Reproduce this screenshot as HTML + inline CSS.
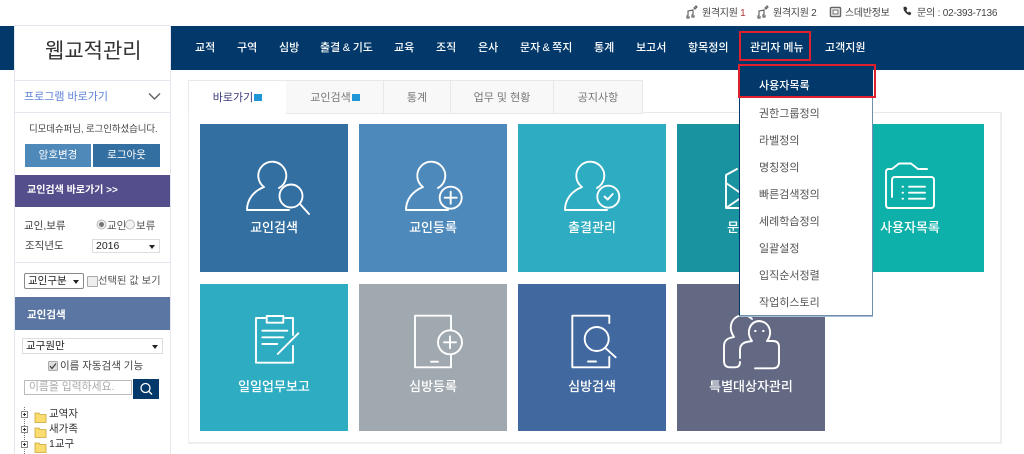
<!DOCTYPE html>
<html lang="ko">
<head>
<meta charset="utf-8">
<title>웹교적관리</title>
<style>
html,body{margin:0;padding:0;background:#fff}
body{width:1024px;height:454px;overflow:hidden;position:relative;font-family:"Liberation Sans","Noto Sans CJK KR",sans-serif;font-size:11px;color:#444}
.a{position:absolute;white-space:nowrap;line-height:14px}
.b{position:absolute}
.nav{color:#fff;font-weight:500;top:41px}
.top{top:7px;font-size:10px;color:#444;letter-spacing:-.3px}
.tile{position:absolute;width:148px;height:148px}
.lab{position:absolute;left:0;width:100%;text-align:center;color:#fff;font-size:13px;font-weight:500;line-height:16px}
.tab{position:absolute;top:80px;height:32px;background:#f8f8f8;border:1px solid #e8e8e8;border-left:0;box-sizing:content-box;text-align:center;line-height:34px;color:#777;font-size:11px}
.n{display:inline-block;width:8px;height:7px;background:#1e96d8;margin-left:1px;vertical-align:0}
.dd{position:absolute;left:759px;color:#555;font-size:11px;line-height:14px;white-space:nowrap}
.sel{position:absolute;box-sizing:border-box;background:#fff;border:1px solid #ddd;line-height:14px}
.arr{position:absolute;width:0;height:0;border-left:3px solid transparent;border-right:3px solid transparent;border-top:4px solid #222}
</style>
</head>
<body>
<!-- header -->
<div class="b" style="left:0;top:26px;width:1024px;height:44px;background:#03396a"></div>

<span class="a top" style="left:702px">원격지원 <span style="color:#a33">1</span></span>
<span class="a top" style="left:773px">원격지원 2</span>
<span class="a top" style="left:845px">스데반정보</span>
<span class="a top" style="left:917px;letter-spacing:-.2px">문의 : 02-393-7136</span>
<svg class="b" style="left:680px;top:-1px" width="240" height="26" fill="none" stroke="#666" stroke-width="1.2">
<path d="M8 17v-5l5-1v5M8 17h-1v2h2v-2M13 16h-1v2h2v-2M14 9l2-2 1 1-2 2z"/>
<path d="M79 17v-5l5-1v5M79 17h-1v2h2v-2M84 16h-1v2h2v-2M85 9l2-2 1 1-2 2z"/>
<rect x="150.500" y="8.500" width="10" height="9" rx="1" stroke-width="1.500"/><rect x="153" y="11" width="5" height="4" stroke-width="1"/>
<path d="M224 8c-1 3 2 7 6 8l1-2-2-1-1 1c-1-1-2-2-2-3l1-1-1-2z" fill="#333" stroke="#333" stroke-width=".6"/>
</svg>

<span class="a nav" style="left:195px">교적</span>
<span class="a nav" style="left:237px">구역</span>
<span class="a nav" style="left:279px">심방</span>
<span class="a nav" style="left:320px;word-spacing:-.5px">출결 &amp; 기도</span>
<span class="a nav" style="left:394px">교육</span>
<span class="a nav" style="left:436px">조직</span>
<span class="a nav" style="left:478px">은사</span>
<span class="a nav" style="left:520px;word-spacing:-.8px">문자 &amp; 쪽지</span>
<span class="a nav" style="left:594px">통계</span>
<span class="a nav" style="left:636px">보고서</span>
<span class="a nav" style="left:688px">항목정의</span>
<span class="a nav" style="left:750px">관리자 메뉴</span>
<span class="a nav" style="left:825px">고객지원</span>
<div class="b" style="left:739px;top:31px;width:72px;height:30px;box-sizing:border-box;border:2px solid #e0202c"></div>

<!-- sidebar -->
<div class="b" style="left:14px;top:25px;width:157px;height:429px;box-sizing:border-box;background:#fff;border-left:1px solid #e6e6ee;border-right:1px solid #e6e6ee;border-top:1px solid #e6e6ee"></div>
<div class="a" style="left:45px;top:39px;font-size:21px;line-height:26px;color:#333">웹교적관리</div>
<div class="b" style="left:15px;top:80px;width:155px;height:1px;background:#e6e6ee"></div>
<div class="a" style="left:24px;top:90px;color:#5f83d6;font-size:11px">프로그램 바로가기</div>
<svg class="b" style="left:146px;top:91px" width="18" height="12" fill="none" stroke="#666" stroke-width="1.500"><path d="M3 2.500l5.500 5.500 5.500-5.500"/></svg>
<div class="b" style="left:15px;top:112px;width:155px;height:1px;background:#e6e6ee"></div>
<div class="a" style="left:29px;top:123px;font-size:9.500px;letter-spacing:-.1px;color:#444">디모데슈퍼님, 로그인하셨습니다.</div>
<div class="a" style="left:25px;top:144px;width:66px;height:23px;background:#4f89ba;color:#fff;text-align:center;line-height:22px;font-size:10.500px">암호변경</div>
<div class="a" style="left:93px;top:144px;width:67px;height:23px;background:#336fa0;color:#fff;text-align:center;line-height:22px;font-size:10.500px">로그아웃</div>

<div class="b" style="left:15px;top:175px;width:155px;height:32px;background:#544f8c"></div>
<div class="a" style="left:27px;top:184px;color:#fff;font-weight:700;font-size:10px">교인검색 바로가기 &gt;&gt;</div>

<div class="a" style="left:24px;top:219px;font-size:10.500px">교인,보류</div>
<svg class="b" style="left:96px;top:219px" width="40" height="12"><circle cx="5.500" cy="5.500" r="4.500" fill="#eee" stroke="#bbb"/><circle cx="5.500" cy="5.500" r="2.500" fill="#777"/><circle cx="34" cy="5.500" r="4.500" fill="#f2f2f2" stroke="#bbb"/></svg>
<div class="a" style="left:107px;top:219px;font-size:10.500px;color:#555">교인</div>
<div class="a" style="left:136px;top:219px;font-size:10.500px;color:#555">보류</div>
<div class="a" style="left:25px;top:239px;font-size:10.500px">조직년도</div>
<div class="sel" style="left:92px;top:239px;width:68px;height:14px;line-height:12px;padding-left:3px;font-size:10.500px;color:#222">2016</div>
<div class="arr" style="left:149px;top:245px"></div>
<div class="b" style="left:15px;top:262px;width:155px;height:1px;background:#e6e6ee"></div>
<div class="sel" style="left:24px;top:273px;width:60px;height:16px;border-color:#888;padding-left:3px;border-radius:2px;font-size:10.500px;color:#222">교인구분</div>
<div class="arr" style="left:73px;top:280px"></div>
<div class="b" style="left:87px;top:276px;width:9px;height:9px;border:1px solid #aaa;border-radius:1px;background:#eee"></div>
<div class="a" style="left:98px;top:275px;font-size:10.300px;color:#555">선택된 값 보기</div>

<div class="b" style="left:15px;top:297px;width:155px;height:33px;background:#5c76a3"></div>
<div class="a" style="left:27px;top:308px;color:#fff;font-weight:700;font-size:10.500px">교인검색</div>
<div class="sel" style="left:22px;top:338px;width:141px;height:16px;padding-left:3px;font-size:10.500px;color:#222">교구원만</div>
<div class="arr" style="left:152px;top:345px"></div>
<svg class="b" style="left:48px;top:361px" width="10" height="10"><rect x=".5" y=".5" width="9" height="9" rx="1" fill="#ddd" stroke="#aaa"/><path d="M2 5l2 2.500 4-5" fill="none" stroke="#444" stroke-width="1.300"/></svg>
<div class="a" style="left:60px;top:359px;font-size:10.500px;color:#444">이름 자동검색 기능</div>
<div class="sel" style="left:24px;top:380px;width:108px;height:15px;border-color:#bbb;padding-left:4px;line-height:13px;font-size:10.800px;color:#aaa">이름을 입력하세요.</div>
<div class="b" style="left:133px;top:379px;width:26px;height:20px;background:#03396a"></div>
<svg class="b" style="left:133px;top:379px" width="26" height="20" fill="none" stroke="#fff" stroke-width="1.300"><circle cx="12.500" cy="9" r="4.500"/><path d="M16 12.500l3 3"/></svg>

<svg class="b" style="left:15px;top:405px" width="34" height="49">
<path d="M9.500 2v47" stroke="#777" stroke-dasharray="1 1" fill="none"/>
<g fill="#fff" stroke="#888"><rect x="6.500" y="6.500" width="6" height="6"/><rect x="6.500" y="21.500" width="6" height="6"/><rect x="6.500" y="36.500" width="6" height="6"/></g>
<path d="M8 9.500h3M9.500 8v3M8 24.500h3M9.500 23v3M8 39.500h3M9.500 38v3" stroke="#333"/>
<g fill="#fbdc6e" stroke="#c9a53a" stroke-width=".8"><path d="M20 8h4l1 1.500h6v8H20z"/><path d="M20 23h4l1 1.500h6v8H20z"/><path d="M20 38h4l1 1.500h6v8H20z"/></g>
</svg>
<div class="a" style="left:49px;top:407px;font-size:10.500px;color:#333">교역자</div>
<div class="a" style="left:49px;top:422px;font-size:10.500px;color:#333">새가족</div>
<div class="a" style="left:49px;top:437px;font-size:10.500px;color:#333">1교구</div>

<!-- main panel -->
<div class="b" style="left:188px;top:112px;width:814px;height:332px;box-sizing:border-box;border:2px solid #eee;border-top:0;border-left-width:1px"></div>
<div class="b" style="left:188px;top:112px;width:814px;height:1px;background:#e8e8e8"></div>
<div class="tab" style="background:#fff;border-left:1px solid #e8e8e8;border-bottom:1px solid #fff;color:#3a3a7a;left:188px;width:97px">바로가기<span class="n"></span></div>
<div class="tab" style="left:286px;width:97px;text-indent:1px">교인검색<span class="n"></span></div>
<div class="tab" style="left:384px;width:66px">통계</div>
<div class="tab" style="left:451px;width:102px">업무 및 현황</div>
<div class="tab" style="left:554px;width:88px">공지사항</div>

<!-- tiles -->
<div class="tile" style="left:200px;top:124px;background:#336fa0"><div class="lab" style="top:96px">교인검색</div></div>
<div class="tile" style="left:359px;top:124px;background:#4e89bb"><div class="lab" style="top:96px">교인등록</div></div>
<div class="tile" style="left:518px;top:124px;background:#2eacc1"><div class="lab" style="top:96px">출결관리</div></div>
<div class="tile" style="left:677px;top:124px;background:#18939f"><div class="lab" style="top:96px">문자관리</div></div>
<div class="tile" style="left:836px;top:124px;background:#0eb0aa"><div class="lab" style="top:96px">사용자목록</div></div>
<div class="tile" style="left:200px;top:284px;height:147px;background:#2eacc1"><div class="lab" style="top:95px">일일업무보고</div></div>
<div class="tile" style="left:359px;top:284px;height:147px;background:#a0a9af"><div class="lab" style="top:95px">심방등록</div></div>
<div class="tile" style="left:518px;top:284px;height:147px;background:#4169a0"><div class="lab" style="top:95px">심방검색</div></div>
<div class="tile" style="left:677px;top:284px;height:147px;background:#636983"><div class="lab" style="top:95px">특별대상자관리</div></div>

<svg class="b" style="left:0;top:0" width="1024" height="454" fill="none" stroke="#fff" stroke-width="1.900" stroke-linecap="round" stroke-linejoin="round">
<!-- person search -->
<path d="M279 188A14 14 0 1 0 264 187C254 191 247 199 247 210H289"/>
<circle cx="291" cy="196" r="11.500"/><path d="M300 204L309 214"/>
<!-- person plus -->
<path d="M438 188A14 14 0 1 0 423 187C413 191 406 199 406 210H448"/>
<circle cx="450.700" cy="197.700" r="11"/><path d="M444.700 197.700H456.700M450.700 191.700V203.700"/>
<!-- person check -->
<path d="M597 188A14 14 0 1 0 582 187C572 191 565 199 565 210H607"/>
<circle cx="608.300" cy="196.700" r="11"/><path d="M604.500 196.500L607.700 199.500L612.700 194"/>
<!-- envelope -->
<path d="M737 169L726 175V208H745M726 183L742 194M726 208L742 197"/>
<!-- folder -->
<path d="M927 169H918L911 163.500H899L892 169H889Q886 169 886 172V205Q886 208 889 208H931Q934 208 934 205V180Q934 177 931 177H895Q892 177 892 180V197"/>
<path d="M909 186.700H925M909 192.700H925M909 198.700H925M902.500 186.700h.5M902.500 192.700h.5M902.500 198.700h.5"/>
<!-- clipboard -->
<path d="M265 318H256V362.700H293V346M285 318H293V335"/>
<rect x="266.700" y="316" width="16.600" height="6.700"/>
<path d="M262.300 330.700H287.300M262.300 337.300H283.300M262.300 344H277.300M298.300 333.300L277.700 354"/>
<!-- tablet plus -->
<path d="M451 330V315.700H415V367.300H451V355M431 361.700H438"/>
<circle cx="450" cy="342.300" r="12"/><path d="M444 342.300H456M450 336.300V348.300"/>
<!-- tablet search -->
<path d="M609.300 323V315.700H572.300V367.300H609.300V357M588 361.500H596"/>
<circle cx="596.700" cy="339" r="12"/><path d="M605 347.700L615.700 357.300"/>
<!-- people -->
<path d="M755 368.300H773Q779 368.300 779 362V347Q779 341 773 341H767C773 333 770 322 759 321C749 322 746 333 752 341C745 342 740 343 740 350V358"/>
<path d="M752 319C745 312 733 315 731 325C730 330 732 334 734 337C728 338 724 340 724 346V361Q724 367.300 730 367.300H735Q740 367.300 740 362"/>
<path d="M755 331h.6M763 331h.6"/>
</svg>

<!-- dropdown -->
<div class="b" style="left:739px;top:66px;width:134px;height:250px;box-sizing:border-box;background:#fff;border:1px solid #03396a;border-bottom:1px solid #6f8fb0;border-right:1px solid #6f8fb0;box-shadow:0 1px 0 #a9bccf"></div>
<div class="b" style="left:739px;top:66px;width:134px;height:30px;background:#03396a"></div>
<div class="b" style="left:738px;top:64px;width:138px;height:34px;box-sizing:border-box;border:2px solid #e0202c"></div>
<div class="dd" style="top:79px;color:#fff;font-weight:500">사용자목록</div>
<div class="dd" style="top:107px">권한그룹정의</div>
<div class="dd" style="top:134px">라벨정의</div>
<div class="dd" style="top:161px">명칭정의</div>
<div class="dd" style="top:188px">빠른검색정의</div>
<div class="dd" style="top:215px">세례학습정의</div>
<div class="dd" style="top:242px">일괄설정</div>
<div class="dd" style="top:269px">입직순서정렬</div>
<div class="dd" style="top:296px">작업히스토리</div>
</body>
</html>
